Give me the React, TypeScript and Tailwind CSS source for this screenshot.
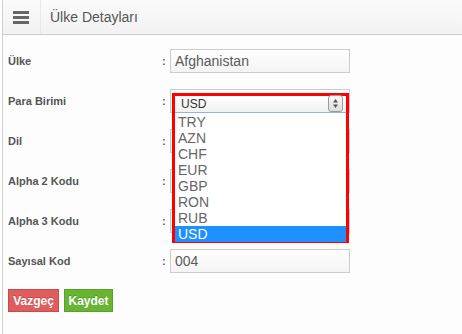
import React from "react"

const ROWS = [
  { label: "Ülke", value: "Afghanistan" },
  { label: "Para Birimi", value: "USD", select: true },
  { label: "Dil", value: "" },
  { label: "Alpha 2 Kodu", value: "" },
  { label: "Alpha 3 Kodu", value: "" },
  { label: "Sayısal Kod", value: "004" },
]

const CURRENCIES = ["TRY", "AZN", "CHF", "EUR", "GBP", "RON", "RUB", "USD"]

function Spinner() {
  return (
    <div className="w-[15px] h-[17px] rounded-[3px] border border-[#9a9a9a] bg-gradient-to-b from-[#fafafa] to-[#dedede] flex items-center justify-center">
      <svg width="7" height="11" viewBox="0 0 7 11">
        <path d="M3.5 1 L6 4.5 H1 Z" fill="#555" />
        <path d="M3.5 10 L6 6.5 H1 Z" fill="#555" />
      </svg>
    </div>
  )
}

function CurrencyDropdown() {
  return (
    <div className="absolute left-[2px] top-[4px] w-[177px] h-[150px] border-[3px] border-[#ff0000] bg-white z-10">
      <div className="h-[17px] flex items-center justify-between pl-[6px] pr-[3px] border-b border-[#8fb3e6] bg-gradient-to-b from-white to-[#f1f1f1]">
        <span className="text-[12px] text-[#333]">USD</span>
        <div className="-mt-[1px]">
          <Spinner />
        </div>
      </div>
      <div className="pt-[1px]">
        {CURRENCIES.map((c, i) => (
          <div
            key={c}
            className={
              i === CURRENCIES.length - 1
                ? "h-[16px] leading-[16px] pl-[3px] text-[14px] bg-[#1e90ff] text-white"
                : "h-[16px] leading-[16px] pl-[3px] text-[14px] text-[#666]"
            }
          >
            {c}
          </div>
        ))}
      </div>
    </div>
  )
}

export default function App() {
  return (
    <div className="w-[462px] h-[334px] overflow-hidden bg-white font-['Liberation_Sans',Arial,sans-serif]">
      <div className="ml-[2px] h-full border-l border-[#cfcfcf] bg-[#fdfdfd]">
        {/* Header */}
        <div className="h-[35px] flex items-stretch border-b border-[#cdcdcd] bg-gradient-to-b from-[#fbfbfb] to-[#f2f2f2]">
          <div className="w-[38px] flex items-center pl-[10px] border-r border-[#e8e8e8]">
            <div className="flex flex-col gap-[2px]">
              <div className="w-[16px] h-[3px] bg-[#666]" />
              <div className="w-[16px] h-[3px] bg-[#666]" />
              <div className="w-[16px] h-[3px] bg-[#666]" />
            </div>
          </div>
          <div className="flex items-center pl-[9px] text-[14px] text-[#555]">
            Ülke Detayları
          </div>
        </div>

        {/* Form */}
        <div className="pt-[14px] pl-[5px]">
          {ROWS.map((row) => (
            <div key={row.label} className="flex items-center h-[24px] mb-[16px]">
              <div className="w-[154px] text-[11px] font-bold text-[#555]">{row.label}</div>
              <div className="w-[8px] text-[11px] font-bold text-[#555]">:</div>
              <div className="relative">
                <div className="w-[180px] h-[24px] border border-[#cccccc] bg-gradient-to-b from-white to-[#f4f4f4] flex items-center pl-[4px] text-[14px] text-[#5a5a5a]">
                  {row.select ? "" : row.value}
                </div>
                {row.select && <CurrencyDropdown />}
              </div>
            </div>
          ))}

          <div className="flex gap-[5px]">
            <button className="h-[23px] w-[51px] text-[12px] font-bold text-white bg-[#e05d5d] border border-[#c94a4a] [text-shadow:0_-1px_0_rgba(0,0,0,0.2)]">
              Vazgeç
            </button>
            <button className="h-[23px] w-[49px] text-[12px] font-bold text-white bg-[#68b531] border border-[#5aa12a] [text-shadow:0_-1px_0_rgba(0,0,0,0.2)]">
              Kaydet
            </button>
          </div>
        </div>
      </div>
    </div>
  )
}
